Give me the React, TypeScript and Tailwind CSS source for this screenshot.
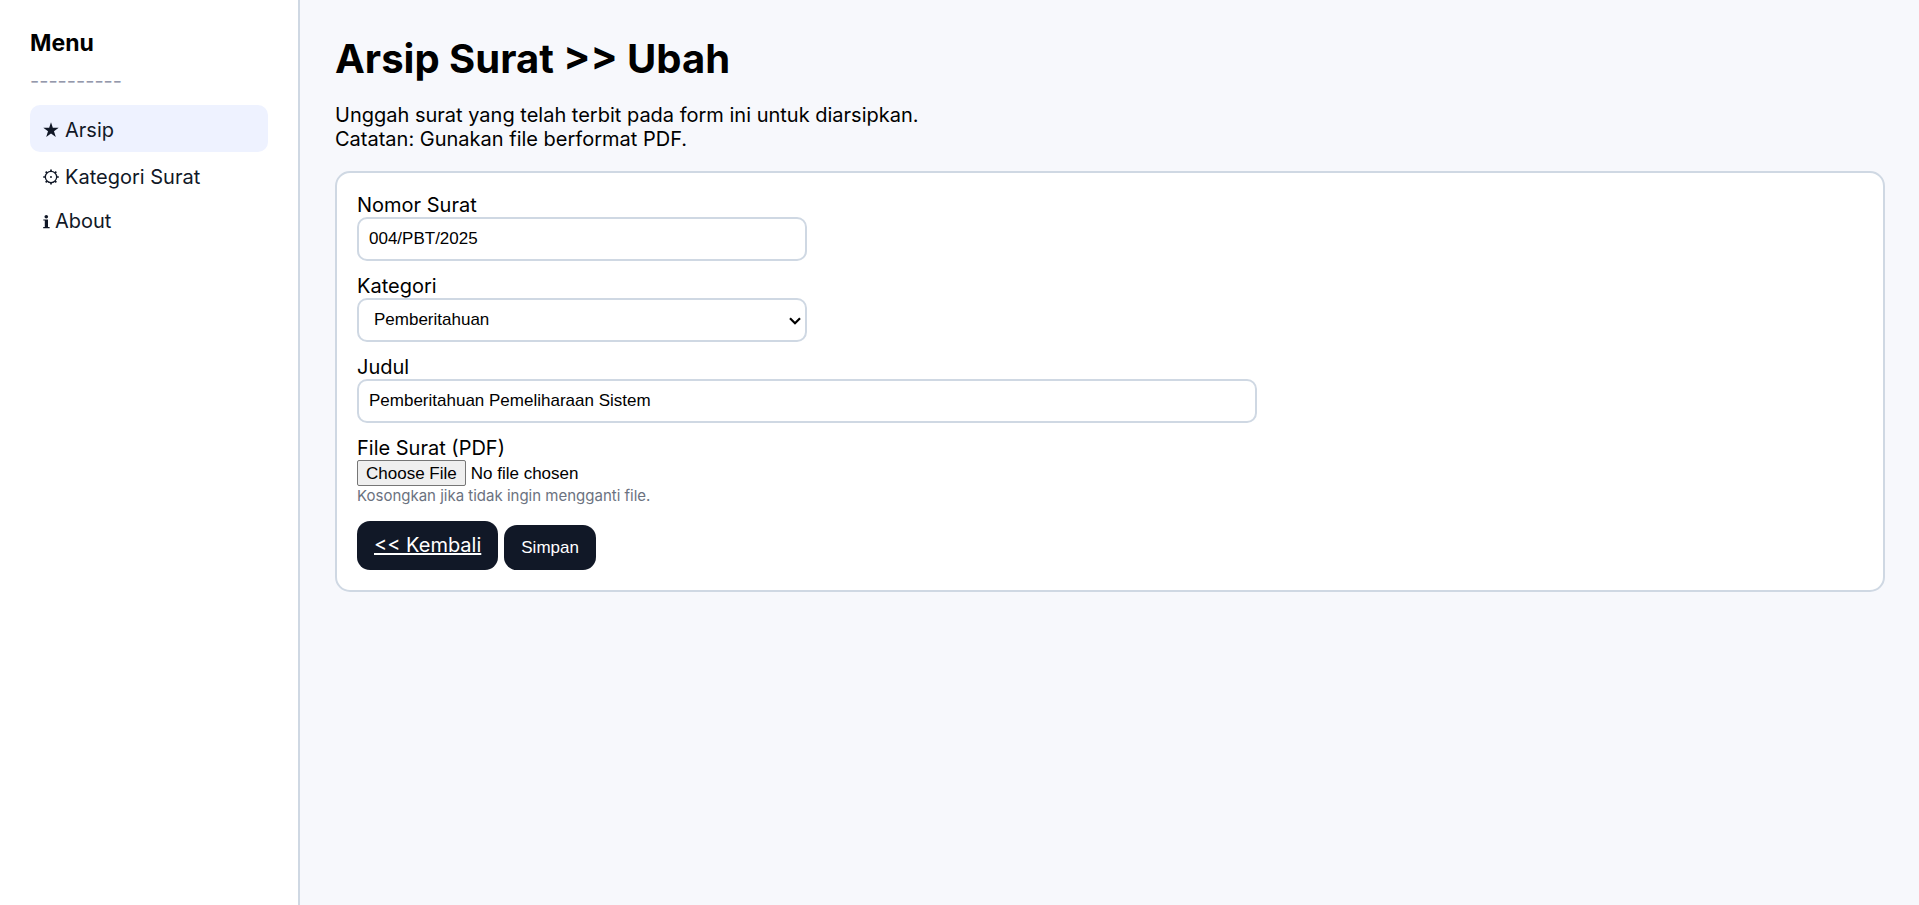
import React from "react";

const StarIcon = () => (
  <svg width="16" height="16" viewBox="0 0 15 15" fill="currentColor" aria-hidden="true">
    <path d="M7.5 0.3 L9.2 5.4 H14.7 L10.3 8.7 L12 14 L7.5 10.8 L3 14 L4.7 8.7 L0.3 5.4 H5.8 Z" />
  </svg>
);

const GearIcon = () => (
  <svg width="16" height="16" viewBox="0 0 15 15" fill="none" stroke="currentColor" aria-hidden="true">
    <circle cx="7.5" cy="7.5" r="5.3" strokeWidth="1.2" />
    <circle cx="7.5" cy="7.5" r="0.9" fill="currentColor" stroke="none" />
    <path
      strokeWidth="1.6"
      d="M12.6 7.5H14.8M0.2 7.5H2.4M11.1 3.9L12.5 2.5M3.9 11.1L2.5 12.5M11.1 11.1L12.5 12.5M3.9 3.9L2.5 2.5M7.5 0.5V2.4M7.5 12.6V14.5"
    />
  </svg>
);

const InfoIcon = () => (
  <svg width="7" height="15" viewBox="0 0 7 15" fill="currentColor" aria-hidden="true">
    <circle cx="3.3" cy="2.7" r="1.8" />
    <path d="M0.3 5.4H5V13H6.6V14.2H0.2V13H1.8V6.6H0.3Z" />
  </svg>
);

const menu = [
  { label: "Arsip", icon: <StarIcon />, style: "h-[47px] gap-[6px] pt-[2px] bg-[#eef2ff]" },
  { label: "Kategori Surat", icon: <GearIcon />, style: "h-[47px] gap-[6px] pt-[2px]" },
  { label: "About", icon: <InfoIcon />, style: "h-11 gap-[5px]" },
];

const field =
  "block h-11 rounded-[10px] border-2 border-[#cfd8e3] bg-white font-['Liberation_Sans',Arial,sans-serif] text-[17px] text-black";

export default function App() {
  return (
    <div className="flex min-h-screen bg-[#f7f8fc] font-[Inter,sans-serif] text-[20px] leading-6 text-black">
      <aside className="w-[300px] shrink-0 border-r-2 border-[#cfd8e3] bg-white px-[30px] py-[29px]">
        <h3 className="text-[23px] leading-7 font-bold">Menu</h3>
        <div className="my-3 text-[#9498ab]">----------</div>
        <nav>
          {menu.map((item) => (
            <a
              key={item.label}
              href="#"
              className={`flex items-center rounded-[10px] px-[13px] text-[#111827] ${item.style}`}
            >
              {item.icon}
              <span>{item.label}</span>
            </a>
          ))}
        </nav>
      </aside>

      <main className="min-w-0 flex-1 py-[35px] pr-[34px] pl-[35px]">
        <h1 className="text-[40px] leading-[48px] font-bold">Arsip Surat &gt;&gt; Ubah</h1>
        <p className="my-5">
          Unggah surat yang telah terbit pada form ini untuk diarsipkan.
          <br />
          Catatan: Gunakan file berformat PDF.
        </p>

        <form
          className="flex flex-col gap-[13px] rounded-[15px] border-2 border-[#cfd8e3] bg-white p-5"
          onSubmit={(e) => e.preventDefault()}
        >
          <div>
            <label htmlFor="nomor" className="block">Nomor Surat</label>
            <input id="nomor" type="text" defaultValue="004/PBT/2025" className={`${field} w-full max-w-[450px] px-[10px]`} />
          </div>

          <div>
            <label htmlFor="kategori" className="block">Kategori</label>
            <div className="relative max-w-[450px]">
              <select id="kategori" className={`${field} w-full appearance-none px-[15px]`}>
                <option>Pemberitahuan</option>
              </select>
              <svg
                className="pointer-events-none absolute top-[19px] right-[6px]"
                width="12"
                height="8"
                viewBox="0 0 12 8"
                fill="none"
                stroke="#000"
                strokeWidth="2.2"
                aria-hidden="true"
              >
                <path d="M1 1.2L6 6.2L11 1.2" />
              </svg>
            </div>
          </div>

          <div>
            <label htmlFor="judul" className="block">Judul</label>
            <input id="judul" type="text" defaultValue="Pemberitahuan Pemeliharaan Sistem" className={`${field} w-full max-w-[900px] px-[10px]`} />
          </div>

          <div>
            <label htmlFor="file" className="block">File Surat (PDF)</label>
            <input
              id="file"
              type="file"
              accept="application/pdf"
              className="block h-[26px] font-['Liberation_Sans',Arial,sans-serif] text-[17px] leading-[26px] file:mr-[5px] file:h-[26px] file:rounded-[2px] file:border file:border-solid file:border-[#767676] file:bg-[#efefef] file:px-2 file:text-black"
            />
            <small className="block text-[15px] leading-5 text-[#6b7280]">Kosongkan jika tidak ingin mengganti file.</small>
          </div>

          <div className="mt-[2px] flex items-end gap-[6px]">
            <a href="#" className="rounded-[13px] bg-[#111827] px-[17px] py-3 leading-[25px] text-white underline">
              &lt;&lt; Kembali
            </a>
            <button
              type="submit"
              className="h-[45px] rounded-[13px] bg-[#111827] px-[17px] font-['Liberation_Sans',Arial,sans-serif] text-[17px] text-white"
            >
              Simpan
            </button>
          </div>
        </form>
      </main>
    </div>
  );
}
